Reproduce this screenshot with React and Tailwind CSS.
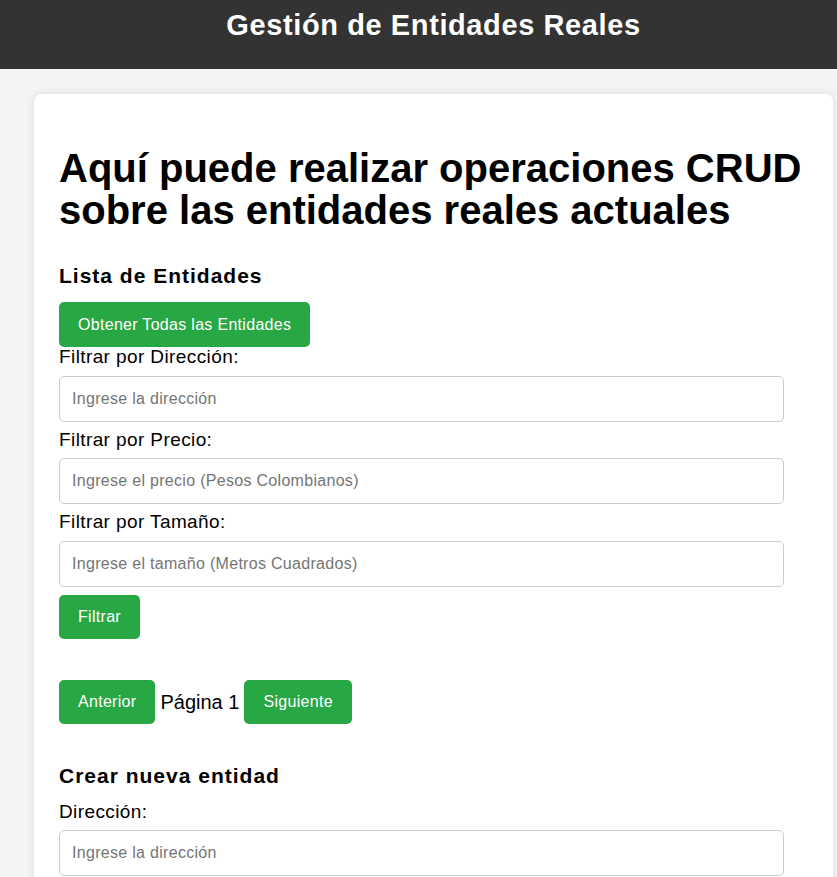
export default function App() {
  const font = { fontFamily: '"Liberation Sans", Arial, sans-serif' };
  const btn = "bg-[#28a745] text-white text-[16px] tracking-[0.3px] rounded-[5px] px-[19px] leading-none";
  const input = "block w-[725px] h-[46px] border border-[#ccc] rounded-[5px] px-[12px] text-[16px] tracking-[0.3px] placeholder:text-[#757575] my-[8px] outline-none";
  const label = "block text-[19px] tracking-[0.4px] leading-[20.5px] text-black";
  const h3 = "text-[21px] tracking-[1px] font-bold leading-[23px] text-black";
  return (
    <div className="min-h-[877px] bg-[#f4f4f4]" style={font}>
      <header className="bg-[#333] h-[69px] flex justify-center pt-[9px] pl-[30px]">
        <h1 className="text-white text-[29px] tracking-[0.6px] font-bold leading-[32px]">Gestión de Entidades Reales</h1>
      </header>
      <main className="ml-[34px] mt-[25px] w-[799px] bg-white rounded-[8px] shadow-[0_0_10px_rgba(0,0,0,0.1)] px-[25px] pt-[53px] pb-[20px]">
        <h2 className="text-[40px] font-bold leading-[42px] text-black">Aquí puede realizar operaciones CRUD sobre las entidades reales actuales</h2>
        <h3 className={h3 + " mt-[33px] mb-[15px]"}>Lista de Entidades</h3>
        <button className={btn + " h-[45px]"}>Obtener Todas las Entidades</button>
        <label className={label}>Filtrar por Dirección:</label>
        <input className={input} placeholder="Ingrese la dirección" />
        <label className={label}>Filtrar por Precio:</label>
        <input className={input} placeholder="Ingrese el precio (Pesos Colombianos)" />
        <label className={label}>Filtrar por Tamaño:</label>
        <input className={input} placeholder="Ingrese el tamaño (Metros Cuadrados)" />
        <button className={btn + " h-[44px]"}>Filtrar</button>
        <div className="flex items-center gap-[5px] mt-[41px]">
          <button className={btn + " h-[44px] px-[18.5px]"}>Anterior</button>
          <span className="text-[20px] text-black">Página 1</span>
          <button className={btn + " h-[44px] px-[18.5px]"}>Siguiente</button>
        </div>
        <h3 className={h3 + " mt-[40px] mb-[15px]"}>Crear nueva entidad</h3>
        <label className={label}>Dirección:</label>
        <input className={input} placeholder="Ingrese la dirección" />
        <label className={label}>Precio:</label>
        <input className={input} placeholder="Ingrese el precio" />
      </main>
    </div>
  );
}
